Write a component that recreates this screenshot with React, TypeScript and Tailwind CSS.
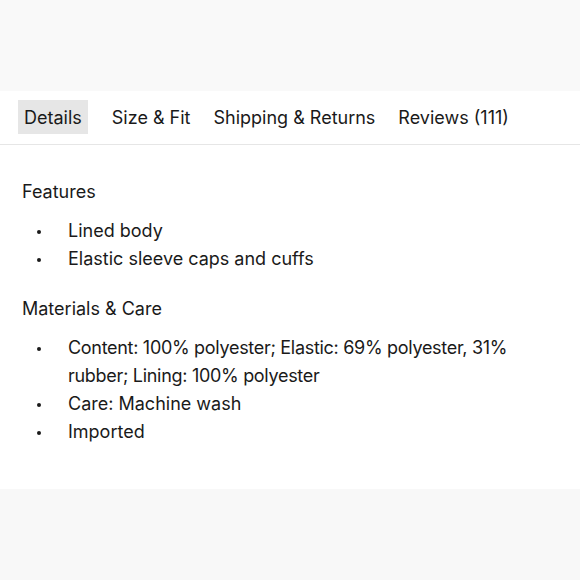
import React from "react";

function Item({ children }: { children: React.ReactNode }) {
  return (
    <li className="flex">
      <span className="w-[46px] shrink-0 relative">
        <span className="absolute left-[15px] top-[13px] w-[4px] h-[4px] rounded-full bg-[#1a1a1a]" />
      </span>
      <span>{children}</span>
    </li>
  );
}

export default function App() {
  const tabs = ["Details", "Size & Fit", "Shipping & Returns", "Reviews (111)"];
  return (
    <div className="w-[580px] h-[580px] bg-[#f9f9f9] overflow-hidden text-[#1a1a1a]" style={{ fontFamily: "Inter, 'Noto Sans', sans-serif" }}>
      <div className="h-[91px] bg-[#f9f9f9]" />
      <div className="bg-white h-[398px]">
        <div className="flex items-center gap-[11px] pl-[18px] pt-[9px] pb-[10px] border-b border-[#e6e6e6]">
          {tabs.map((t, i) => (
            <div
              key={t}
              className={`h-[34px] flex items-center px-[6px] text-[18px] ${i === 0 ? "bg-[#e6e6e6] mr-[7px]" : ""}`}
            >
              {t}
            </div>
          ))}
        </div>
        <div className="pl-[22px] pt-[33px] text-[18px] leading-[28px]">
          <div>Features</div>
          <ul className="mt-[11px]">
            <Item>Lined body</Item>
            <Item>Elastic sleeve caps and cuffs</Item>
          </ul>
          <div className="mt-[22px]">Materials &amp; Care</div>
          <ul className="mt-[11px] pr-[30px]">
            <Item>
              <span className="tracking-[-0.3px]">Content: 100% polyester; Elastic: 69% polyester, 31% rubber; Lining: 100% polyester</span>
            </Item>
            <Item>Care: Machine wash</Item>
            <Item>Imported</Item>
          </ul>
        </div>
      </div>
      <div className="h-[91px] bg-[#f8f8f8]" />
    </div>
  );
}
